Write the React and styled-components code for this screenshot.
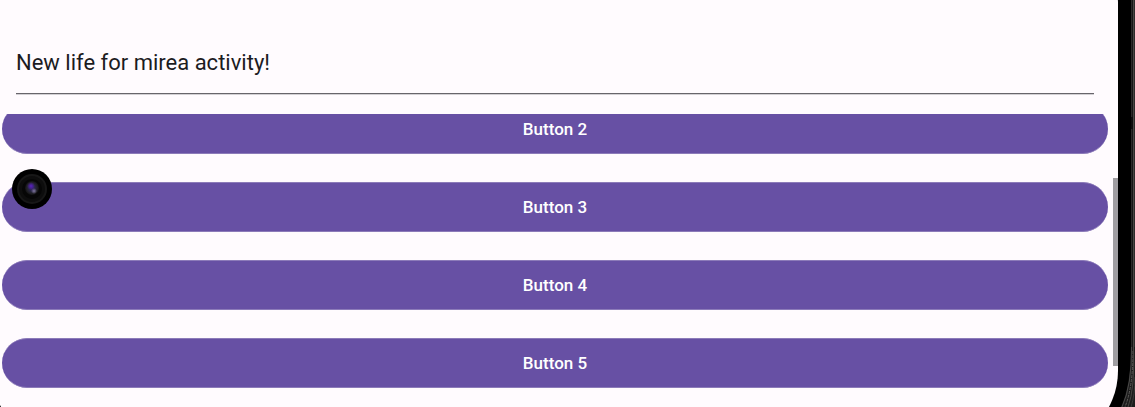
import React, { useState } from "react";
import styled, { createGlobalStyle } from "styled-components";

const GlobalStyle = createGlobalStyle`
  * { box-sizing: border-box; }
  html, body { margin: 0; height: 100%; overflow: hidden; }
  body { background: #000; font-family: Roboto, "Noto Sans", sans-serif; }
`;

const Device = styled.div`
  position: relative;
  display: flex;
  height: 100vh;
  overflow: hidden;
  background: #000;
`;

const Screen = styled.main`
  flex: 1;
  display: flex;
  flex-direction: column;
  min-width: 0;
  height: calc(100vh + 112px);
  margin: -72px 0 0 -8px;
  padding: 72px 0 40px 8px;
  border-radius: 76px;
  overflow: hidden;
  background: #fffbfe;
`;

const Bezel = styled.div`
  flex: none;
  display: flex;
  flex-direction: column;
  justify-content: space-between;
  width: 17px;
  background: linear-gradient(
    to right,
    #000 13px,
    #2b2a29 13px 14px,
    #161616 14px 15px,
    #484643 15px 16px,
    #2c2b2a 16px
  );
`;

const SideKey = styled.div`
  width: 2px;
  height: 12px;
  margin: 117px 2px 0 auto;
  background: #0c0c0c;
`;

const BezelCorner = styled.svg`
  width: 17px;
  height: 60px;
`;

const TextField = styled.input`
  flex: none;
  height: 62px;
  margin: 32px 24px 20px 16px;
  padding: 0;
  border: 0;
  border-bottom: 1px solid #68656b;
  outline: 0;
  background: transparent;
  box-shadow: 0 1px 0 #d3d0d4;
  color: #1c1b1f;
  font: 400 22px/28px Roboto, "Noto Sans", sans-serif;
`;

const ScrollArea = styled.section`
  flex: 1;
  display: flex;
  min-height: 0;
  overflow: hidden;
`;

const ButtonList = styled.div`
  flex: 1;
  display: flex;
  flex-direction: column;
  gap: 28px;
  margin: -10px 5px 0 2px;
`;

const FilledButton = styled.button`
  flex: none;
  height: 50px;
  padding: 0;
  border: solid #6750a4;
  border-width: 1px 0;
  border-color: #8c7bb9 #6750a4;
  border-radius: 25px;
  background: #6750a4;
  color: #fff;
  font: 500 17px/24px Roboto, "Noto Sans", sans-serif;
`;

const ScrollThumb = styled.div`
  flex: none;
  width: 5px;
  height: 188px;
  margin-top: 64px;
  background: #9f9da1;
`;

const Camera = styled.svg`
  position: absolute;
  left: 12px;
  top: 169px;
  width: 40px;
  height: 40px;
`;

const BUTTONS = ["Button 2", "Button 3", "Button 4", "Button 5"];

export default function App() {
  const [text, setText] = useState("New life for mirea activity!");
  return (
    <Device>
      <GlobalStyle />
      <Screen>
        <TextField
          type="text"
          aria-label="Message"
          value={text}
          onChange={(e) => setText(e.target.value)}
        />
        <ScrollArea>
          <ButtonList>
            {BUTTONS.map((label) => (
              <FilledButton key={label} type="button">{label}</FilledButton>
            ))}
          </ButtonList>
          <ScrollThumb />
        </ScrollArea>
      </Screen>
      <Bezel>
        <SideKey />
        <BezelCorner viewBox="0 0 17 60" aria-hidden="true">
          <path d="M13 0Q13 38 3 60H17V0Z" fill="#1c1c1c" />
          <path d="M13.500 0Q14 38 4 60" fill="none" stroke="#4b4a49" />
          <path d="M15 4Q15 40 7 60" fill="none" stroke="#5e5c5a" strokeDasharray="3 1" />
          <path d="M15.500 0Q17 42 10 60" fill="none" stroke="#484643" />
          <path d="M17 30Q17 48 13 60" fill="none" stroke="#3b3a39" />
        </BezelCorner>
      </Bezel>
      <Camera viewBox="0 0 40 40" aria-hidden="true">
        <defs>
          <radialGradient id="lens">
            <stop offset="0" stopColor="#33236b" />
            <stop offset="0.4" stopColor="#29264a" />
            <stop offset="0.75" stopColor="#202026" />
            <stop offset="1" stopColor="#121213" />
          </radialGradient>
          <radialGradient id="glint">
            <stop offset="0" stopColor="#8177a0" />
            <stop offset="1" stopColor="#8177a0" stopOpacity="0" />
          </radialGradient>
          <radialGradient id="violet">
            <stop offset="0" stopColor="#5a1fc0" />
            <stop offset="1" stopColor="#5a1fc0" stopOpacity="0" />
          </radialGradient>
        </defs>
        <circle cx="20" cy="20" r="20" fill="#000" />
        <circle cx="20" cy="20" r="14" fill="#0d0d0d" stroke="#171717" strokeWidth="2" />
        <circle cx="20" cy="20" r="10" fill="#060606" />
        <circle cx="20" cy="19" r="7" fill="url(#lens)" />
        <circle cx="19" cy="17" r="4" fill="url(#violet)" />
        <circle cx="22" cy="22" r="3" fill="url(#glint)" />
      </Camera>
    </Device>
  );
}
